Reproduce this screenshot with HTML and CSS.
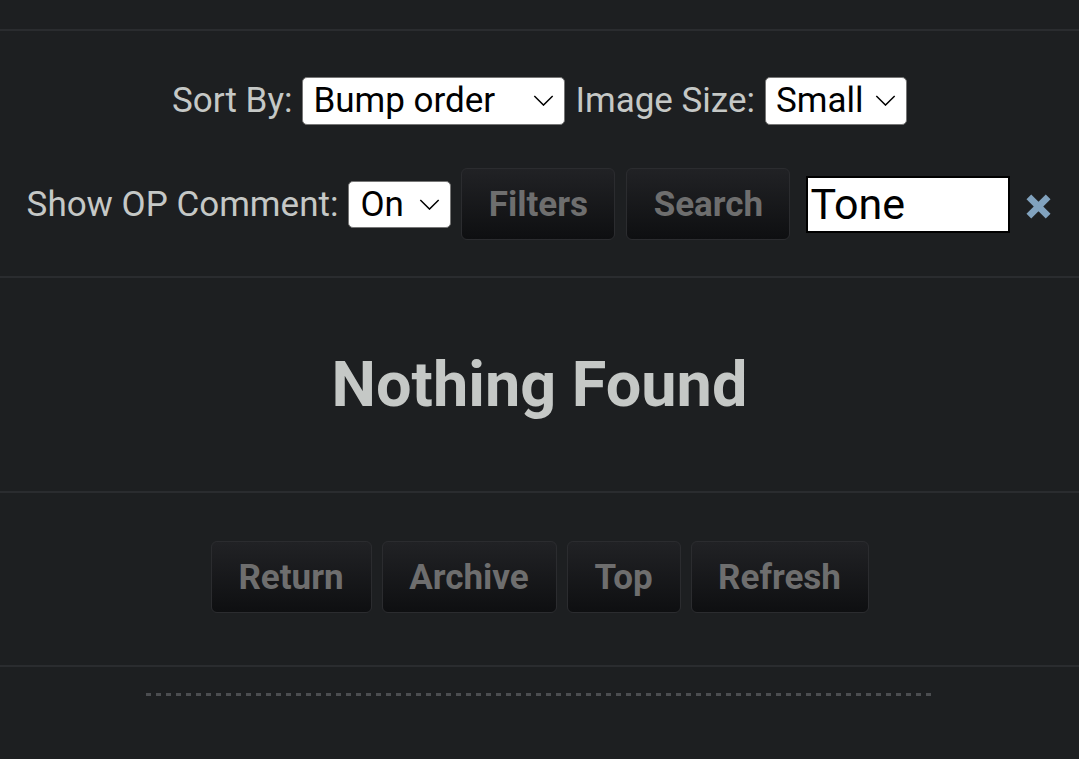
FILE: index.html
```html
<!DOCTYPE html>
<html>
<head>
<meta charset="utf-8">
<link rel="stylesheet" href="styles.css">
</head>
<body>
<div class="page">
  <div class="top-gap"></div>
  <hr class="sep">
  <div class="controls">
    <div class="row row-1">
      <span class="label">Sort By:</span>
      <span class="select select-sort"><span class="sel-text">Bump order</span><svg class="chev" viewBox="0 0 22 12"><path d="M1 1 L11 11 L21 1" fill="none" stroke="#000" stroke-width="1.6"/></svg></span>
      <span class="label">Image Size:</span>
      <span class="select select-size"><span class="sel-text">Small</span><svg class="chev" viewBox="0 0 22 12"><path d="M1 1 L11 11 L21 1" fill="none" stroke="#000" stroke-width="1.6"/></svg></span>
    </div>
    <div class="row row-2">
      <span class="label">Show OP Comment:</span>
      <span class="select select-op"><span class="sel-text">On</span><svg class="chev" viewBox="0 0 22 12"><path d="M1 1 L11 11 L21 1" fill="none" stroke="#000" stroke-width="1.6"/></svg></span>
      <span class="btn btn-filters">Filters</span>
      <span class="btn btn-search">Search</span>
      <span class="search-box">Tone</span>
      <svg class="clear" viewBox="0 0 28 28"><path d="M4 4 L24 24 M24 4 L4 24" stroke="#81a2be" stroke-width="7" stroke-linecap="butt"/></svg>
    </div>
  </div>
  <hr class="sep">
  <div class="empty">
    <h1 class="empty-title">Nothing Found</h1>
  </div>
  <hr class="sep">
  <div class="nav">
    <span class="btn btn-return">Return</span>
    <span class="btn btn-archive">Archive</span>
    <span class="btn btn-top">Top</span>
    <span class="btn btn-refresh">Refresh</span>
  </div>
  <hr class="sep">
  <div class="dash-wrap"><div class="dash"></div></div>
</div>
</body>
</html>
```
FILE: styles.css
```css
html, body {
  margin: 0;
  padding: 0;
  background: #1d1f21;
}
body {
  font-family: Roboto, "Liberation Sans", sans-serif;
  color: #c5c8c6;
  width: 1079px;
  height: 759px;
  overflow: hidden;
}
.top-gap {
  height: 29px;
}
.sep {
  margin: 0;
  border: 0;
  height: 2px;
  background: #2a2c2f;
}
.controls {
  padding-top: 46px;
  padding-bottom: 36px;
  display: flex;
  flex-direction: column;
  align-items: center;
  gap: 44px;
}
.row {
  display: flex;
  align-items: center;
  justify-content: center;
}
.row-1 { height: 47px; }
.row-2 { height: 72px; }
.label {
  font-size: 35px;
  color: #c5c8c6;
  margin-right: 10px;
}
.select {
  box-sizing: border-box;
  height: 48px;
  background: #fff;
  border: 1px solid #767676;
  border-radius: 5px;
  display: flex;
  align-items: center;
  justify-content: space-between;
  padding: 0 10px 0 10px;
  color: #000;
  font-size: 35px;
  margin-right: 10px;
}
.select-sort { width: 263px; }
.select-size { width: 142px; margin-right: 0; }
.select-op { width: 103px; height: 47px; padding-left: 11px; }
.chev {
  width: 21px;
  height: 11px;
  flex: none;
}
.btn {
  box-sizing: border-box;
  height: 72px;
  display: inline-flex;
  align-items: center;
  justify-content: center;
  font-weight: 700;
  font-size: 35px;
  color: #6e6e6e;
  background: linear-gradient(to bottom, #212225, #0e0f11);
  border: 1px solid #2b2c2f;
  border-radius: 6px;
}
.btn-filters { width: 154px; margin-right: 11px; }
.btn-search { width: 164px; margin-right: 16px; }
.search-box {
  box-sizing: border-box;
  width: 204px;
  height: 57px;
  background: #fff;
  border: 2px solid #000;
  color: #000;
  font-size: 43px;
  display: flex;
  align-items: center;
  padding-left: 2px;
  margin-right: 15px;
}
.clear {
  width: 27px;
  height: 27px;
  margin-top: 4px;
}
.empty {
  height: 213px;
  display: flex;
  align-items: center;
  justify-content: center;
}
.empty-title {
  margin: 0;
  font-size: 63px;
  font-weight: 700;
  color: #c5c8c6;
}
.nav {
  display: flex;
  justify-content: center;
  gap: 10px;
  padding-top: 48px;
  padding-bottom: 52px;
}
.btn-return { width: 161px; }
.btn-archive { width: 175px; }
.btn-top { width: 114px; }
.btn-refresh { width: 178px; }
.dash-wrap {
  padding-top: 26px;
  display: flex;
  justify-content: center;
}
.dash {
  width: 788px;
  height: 3px;
  background: repeating-linear-gradient(to right, #4b4d50 0 5px, transparent 5px 10px);
}
```
